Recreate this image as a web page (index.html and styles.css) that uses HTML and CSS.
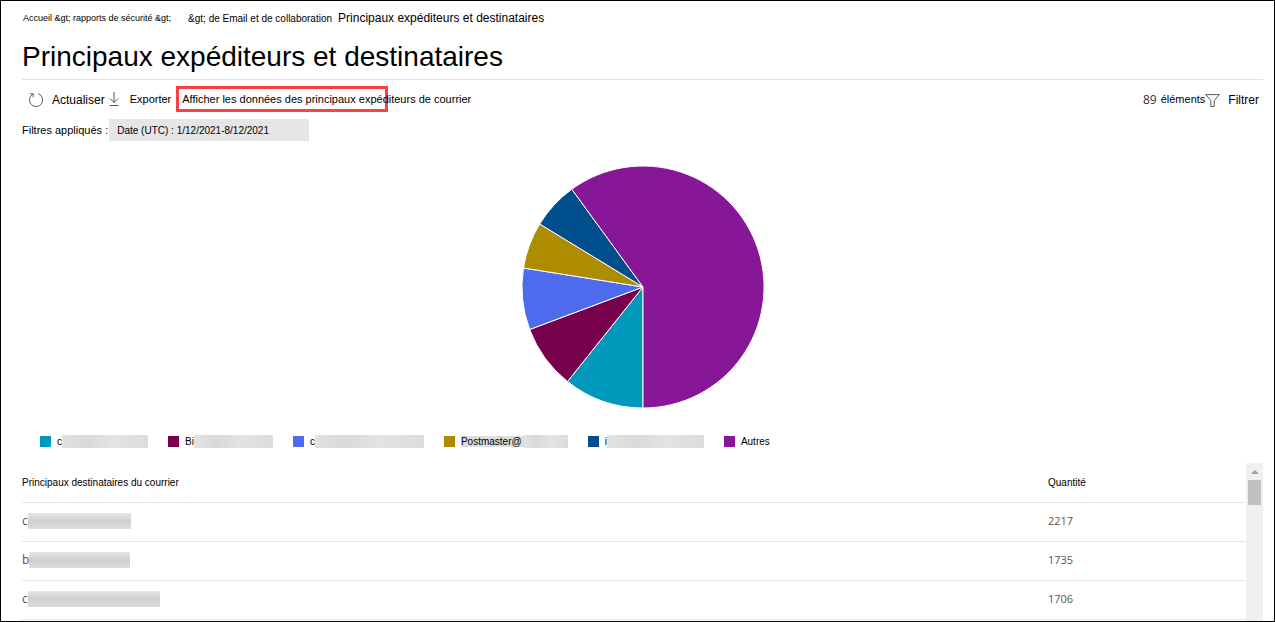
FILE: index.html
```html
<!DOCTYPE html>
<html lang="fr">
<head>
  <meta charset="UTF-8">
  <meta name="viewport" content="width=device-width, initial-scale=1.0">
  <title>Principaux expéditeurs et destinataires</title>
  <link rel="stylesheet" href="styles.css">
</head>
<body>
  <div class="page">
    <nav class="breadcrumb">
      <a href="#" class="crumb-home">Accueil &amp;gt; rapports de sécurité &amp;gt;</a>
      <a href="#" class="crumb-section">&amp;gt; de Email et de collaboration</a>
      <span class="crumb-current">Principaux expéditeurs et destinataires</span>
    </nav>

    <h1>Principaux expéditeurs et destinataires</h1>

    <div class="toolbar">
      <button class="tool refresh">
        <svg width="16" height="16" viewBox="0 0 16 16"><path d="M10.5 1.8A6.6 6.6 0 1 1 4.5 2.4M1.8 1.8H5.2V5.2" /></svg>
        Actualiser
      </button>
      <button class="tool export">
        <svg width="10" height="14" viewBox="0 0 10 14"><path d="M5 0V10.500M1 6.500L5 10.500L9 6.500M.5 13.500H9.500" /></svg>
        Exporter
      </button>
      <button class="tool show-data">Afficher les données des principaux expéditeurs de courrier</button>
      <span class="count"><span class="number">89</span> éléments</span>
      <button class="tool filter">
        <svg width="15" height="13" viewBox="0 0 15 13"><path d="M.7.600H14.300L9.200 6.500V12.400H5.800V6.500Z" /></svg>
        Filtrer
      </button>
    </div>

    <div class="applied">
      <span>Filtres appliqués :</span>
      <span class="chip">Date (UTC) : 1/12/2021-8/12/2021</span>
    </div>

    <!-- pie, centre at 0,0 -->
    <svg class="pie" width="244" height="244" viewBox="-122 -122 244 244" role="img" aria-label="Répartition du courrier">
      <path fill="#0099bc" d="M0 0L0 121A121 121 0 0 1 -75.500 94.500Z" />
      <path fill="#77004d" d="M0 0L-75.500 94.500A121 121 0 0 1 -113.300 42.500Z" />
      <path fill="#4f6bed" d="M0 0L-113.300 42.500A121 121 0 0 1 -119.500 -19Z" />
      <path fill="#ae8c00" d="M0 0L-119.500 -19A121 121 0 0 1 -103.300 -63Z" />
      <path fill="#004e8c" d="M0 0L-103.300 -63A121 121 0 0 1 -71.200 -97.800Z" />
      <path fill="#881798" d="M0 0L-71.200 -97.800A121 121 0 1 1 0 121Z" />
    </svg>

    <ul class="legend">
      <li><i class="swatch teal"></i><span>c</span><span class="masked w86"></span></li>
      <li><i class="swatch plum"></i><span>Bi</span><span class="masked w79"></span></li>
      <li><i class="swatch blue"></i><span>c</span><span class="masked w109"></span></li>
      <li><i class="swatch gold"></i><span class="marked">Postmaster@</span><span class="masked w44"></span></li>
      <li><i class="swatch navy"></i><span>i</span><span class="masked w97"></span></li>
      <li><i class="swatch purple"></i><span>Autres</span></li>
    </ul>

    <div class="grid">
      <table>
        <thead>
          <tr><th>Principaux destinataires du courrier</th><th class="qty">Quantité</th></tr>
        </thead>
        <tbody>
          <tr><td><div class="mail">c<span class="masked w103"></span></div></td><td class="qty">2217</td></tr>
          <tr><td><div class="mail">b<span class="masked w101"></span></div></td><td class="qty">1735</td></tr>
          <tr><td><div class="mail">c<span class="masked w132"></span></div></td><td class="qty">1706</td></tr>
        </tbody>
      </table>
      <div class="scrollbar">
        <button class="scroll-up" aria-label="Défiler vers le haut"></button>
        <div class="thumb"></div>
      </div>
    </div>
  </div>
</body>
</html>
```

FILE: styles.css
```css
* { box-sizing: border-box; }
body { margin: 0; font-family: "Liberation Sans", Arial, sans-serif; font-size: 11px; color: #000; background: #fff; }
.page { height: 100vh; padding: 0 11px 0 21px; border: 1px solid #000; overflow: hidden;
  display: flex; flex-direction: column; }

.breadcrumb { display: flex; align-items: center; height: 34px; padding-left: 1px; white-space: nowrap; }
.breadcrumb a { color: inherit; text-decoration: none; }
.crumb-home { font-size: 9px; margin-right: 17px; }
.crumb-section { font-size: 10px; margin-right: 6px; }
.crumb-current { font-size: 12px; }

h1 { margin: 0; height: 45px; line-height: 44px; font-size: 28px; font-weight: normal;
  border-bottom: 1px solid #e3e3e3; white-space: nowrap; }

.toolbar { display: flex; align-items: center; height: 38px; white-space: nowrap; }
.tool { display: flex; align-items: center; padding: 0; border: none; background: none;
  font: inherit; color: inherit; cursor: pointer; }
.tool svg { fill: none; stroke: #555; stroke-width: 1; }
.refresh { font-size: 12px; gap: 8px; padding-left: 6px; margin-right: 4px; }
.export { gap: 11px; margin-right: 5px; }
.show-data { width: 212px; height: 26px; padding-left: 3px; border: 3px solid #f94144; }
.count { display: flex; align-items: center; gap: 4px; margin-left: auto; }
.number { font-family: "Open Sans", sans-serif; font-size: 12px; color: #333; }
.filter { font-size: 12px; gap: 8px; padding-right: 4px; }
.refresh, .filter { padding-top: 2px; }

.applied { display: flex; align-items: center; height: 22px; margin-top: 1px; }
.chip { width: 200px; height: 22px; line-height: 24px; margin-left: 1px; padding-left: 8px; background: #e6e6e6; font-size: 10px; }

.pie { align-self: center; flex: none; margin-top: 24px; }
.pie path { stroke: #fff; stroke-width: 1; }

.legend { display: flex; align-items: center; gap: 20px; height: 16px; margin: 24px 0 0; padding: 0 0 0 18px;
  list-style: none; font-size: 10px; white-space: nowrap; }
.legend li { display: flex; align-items: center; }
.swatch { width: 11px; height: 11px; margin-right: 6px; }
.teal { background: #0099bc; }
.plum { background: #77004d; }
.blue { background: #4f6bed; }
.gold { background: #ae8c00; }
.navy { background: #004e8c; }
.purple { background: #881798; }
.marked { background: #dedede; padding-right: 2px; }

/* hidden part of an address */
.masked { display: inline-block; height: 13px; background: linear-gradient(90deg, #e2e2e2, #d9d9d9 30%, #e3e3e3 60%, #dcdcdc); }
.w44 { width: 44px; }
.w79 { width: 79px; }
.w86 { width: 86px; }
.w97 { width: 97px; }
.w101 { width: 101px; }
.w103 { width: 103px; }
.w109 { width: 109px; }
.w132 { width: 132px; }

.grid { display: flex; flex: 1; margin-top: 14px; min-height: 0; }
table { flex: 1; align-self: flex-start; border-collapse: collapse; }
th, td { height: 39px; padding: 0; text-align: left; border-bottom: 1px solid #e6e6e6; }
th { font-size: 10px; font-weight: normal; }
.qty { width: 198px; }
td { padding-bottom: 2px; font-family: "Open Sans", sans-serif; font-size: 11px; color: #555; }
.mail { display: flex; align-items: center; font-size: 12px; line-height: 16px; }
.mail .masked { height: 16px; background: linear-gradient(#e6e6e6, #cfcfcf 50%, #dcdcdc); }

.scrollbar { width: 17px; padding: 0 2px; background: #f0f0f0; }
.scroll-up { display: flex; align-items: center; justify-content: center; width: 13px; height: 17px;
  padding: 0; border: none; background: none; }
.scroll-up::before { content: ""; border: 4px solid transparent; border-top: none; border-bottom-color: #a0a0a0; }
.thumb { height: 25px; background: #c1c1c1; }
```
